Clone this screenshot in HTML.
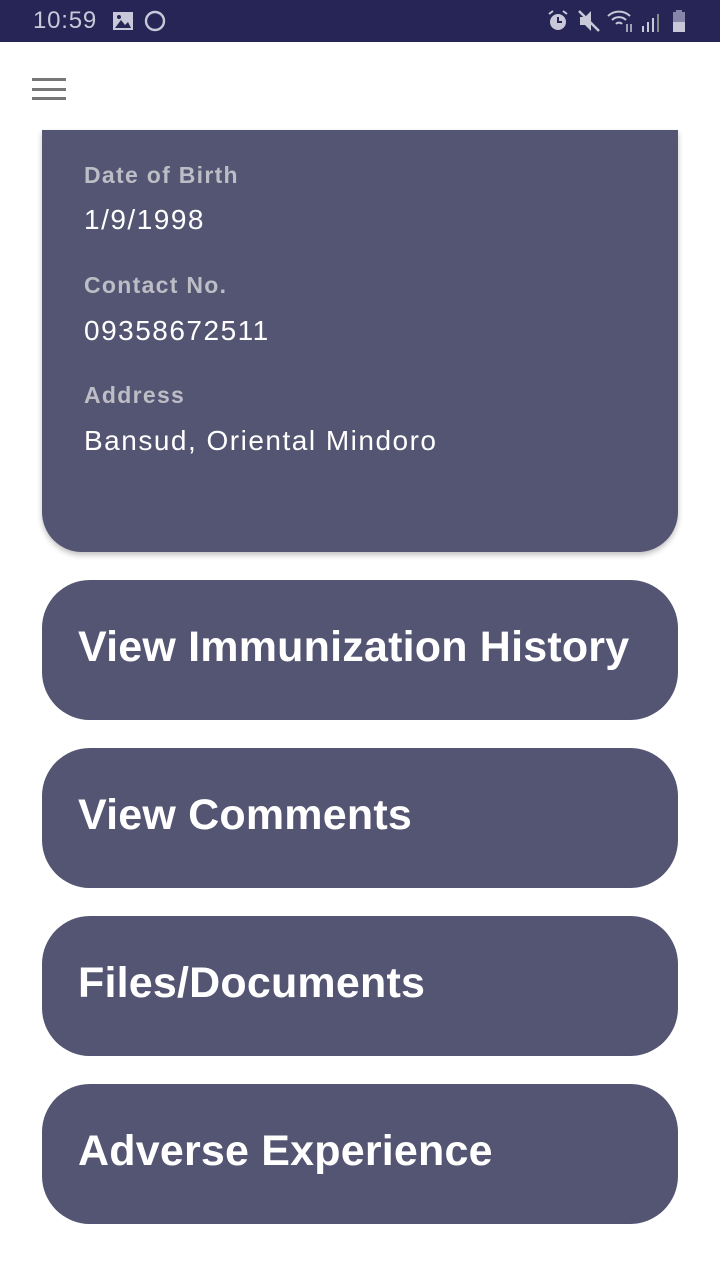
<!DOCTYPE html>
<html><head><meta charset="utf-8"><style>
*{margin:0;padding:0;box-sizing:border-box}
body{width:720px;height:1280px;background:#fff;font-family:"Liberation Sans",sans-serif;position:relative;overflow:hidden}
.sb{position:absolute;left:0;top:0;width:720px;height:42px;background:#272555;color:#c9c8d8}
.time{position:absolute;left:33px;top:7px;font-size:24px;letter-spacing:0.8px}
.ham{position:absolute;left:32px;width:34px;height:3px;background:#777}
.card{position:absolute;left:42px;top:130px;width:636px;height:422px;background:#545473;border-radius:0 0 40px 40px;box-shadow:0 3px 6px rgba(0,0,0,.25)}
.lbl{position:absolute;left:42px;color:#bdbdc6;font-weight:bold;font-size:23px;letter-spacing:1.3px}
.val{position:absolute;left:42px;color:#fff;font-size:28px;letter-spacing:1.5px}
.btn{position:absolute;left:42px;width:636px;height:140px;background:#545473;border-radius:48px;color:#fff;font-weight:bold;font-size:43px;padding-left:36px;line-height:134px;letter-spacing:0.2px;white-space:nowrap}
</style></head><body>
<div class="sb">
<div class="time">10:59</div>
<svg style="position:absolute;left:112px;top:11px" width="22" height="20"><rect x="1" y="1" width="20" height="18" fill="#c9c8d8"/><path d="M3 17 L9 9 L13 14 L16 11 L19 17Z" fill="#272555"/><circle cx="7" cy="6" r="2" fill="#272555"/></svg>
<svg style="position:absolute;left:144px;top:10px" width="24" height="24"><circle cx="11" cy="11" r="9" fill="none" stroke="#c9c8d8" stroke-width="2.4"/></svg>
<svg style="position:absolute;left:546px;top:9px" width="24" height="24"><circle cx="12" cy="13" r="8" fill="#c9c8d8"/><path d="M12 8v5h4" stroke="#272555" stroke-width="2" fill="none"/><path d="M3 5l4-3M21 5l-4-3" stroke="#c9c8d8" stroke-width="2"/></svg>
<svg style="position:absolute;left:576px;top:9px" width="26" height="24"><path d="M4 8h5l6-6v20l-6-6H4z" fill="#c9c8d8"/><path d="M3 2l20 20" stroke="#c9c8d8" stroke-width="2.5"/></svg>
<svg style="position:absolute;left:606px;top:8px" width="30" height="26"><path d="M2 8a16 16 0 0 1 22 0M6 12a10 10 0 0 1 14 0M10 16a4 4 0 0 1 6 0" stroke="#c9c8d8" stroke-width="2" fill="none"/><path d="M21 16v8M25 16v8" stroke="#c9c8d8" stroke-width="1.5"/></svg>
<svg style="position:absolute;left:640px;top:10px" width="24" height="24"><rect x="2" y="16" width="2" height="6" fill="#c9c8d8"/><rect x="7" y="12" width="2" height="10" fill="#c9c8d8"/><rect x="12" y="8" width="2" height="14" fill="#c9c8d8"/><rect x="17" y="4" width="2" height="18" fill="#888"/></svg>
<svg style="position:absolute;left:670px;top:9px" width="20" height="26"><rect x="6" y="1" width="6" height="3" fill="#8886a8"/><rect x="3" y="3" width="12" height="20" fill="#8886a8"/><rect x="3" y="13" width="12" height="10" fill="#c9c8d8"/></svg>
</div>
<div class="ham" style="top:78px"></div>
<div class="ham" style="top:88px"></div>
<div class="ham" style="top:97px"></div>
<div class="card">
<div class="lbl" style="top:32px">Date of Birth</div>
<div class="val" style="top:74px">1/9/1998</div>
<div class="lbl" style="top:142px">Contact No.</div>
<div class="val" style="top:185px">09358672511</div>
<div class="lbl" style="top:252px">Address</div>
<div class="val" style="top:295px">Bansud, Oriental Mindoro</div>
</div>
<div class="btn" style="top:580px">View Immunization History</div>
<div class="btn" style="top:748px">View Comments</div>
<div class="btn" style="top:916px">Files/Documents</div>
<div class="btn" style="top:1084px">Adverse Experience</div>
</body></html>
